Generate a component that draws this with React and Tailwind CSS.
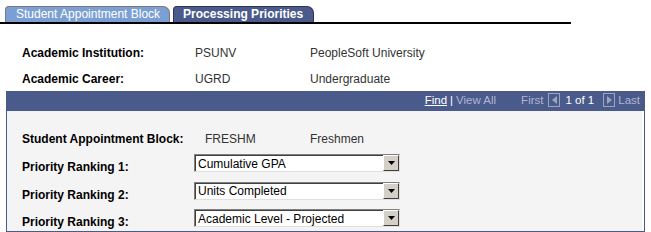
import { useState } from 'react';

const HEADER = [
  { label: 'Academic Institution:', code: 'PSUNV', desc: 'PeopleSoft University' },
  { label: 'Academic Career:', code: 'UGRD', desc: 'Undergraduate' },
];

const RANKINGS = [
  { label: 'Priority Ranking 1:', value: 'Cumulative GPA' },
  { label: 'Priority Ranking 2:', value: 'Units Completed' },
  { label: 'Priority Ranking 3:', value: 'Academic Level - Projected' },
];

function Dropdown({ value }) {
  return (
    <div className="flex h-[18px] w-[206px] border border-t-[#808080] border-l-[#808080] border-b-[#e0e0e0] border-r-[#e0e0e0] bg-white">
      <div className="flex flex-1 items-center border-t border-l border-[#404040] pl-[2px] text-[12px] text-black leading-none">
        {value}
      </div>
      <div className="flex w-[16px] items-center justify-center border border-t-white border-l-white border-b-[#404040] border-r-[#404040] bg-[#d4d0c8]">
        <svg width="7" height="4" viewBox="0 0 7 4"><path d="M0 0h7L3.5 4z" fill="#000" /></svg>
      </div>
    </div>
  );
}

function NavArrow({ dir }) {
  return (
    <span className="inline-flex h-[14px] w-[12px] items-center justify-center border border-[#9ca3bf]">
      <svg width="5" height="8" viewBox="0 0 5 8">
        {dir === 'left'
          ? <path d="M5 0v8L0 4z" fill="#9ca3bf" />
          : <path d="M0 0v8l5-4z" fill="#9ca3bf" />}
      </svg>
    </span>
  );
}

export default function App() {
  const [active] = useState(1);

  return (
    <div className="h-[232px] w-[651px] overflow-hidden bg-white font-['Liberation_Sans',Arial,sans-serif] text-[12px] text-[#333]">
      {/* tabs */}
      <div className="flex w-[571px] items-end gap-[3px] border-b-2 border-black pl-[5px] pt-[6px]">
        <div className={`h-[16px] rounded-tl-[4px] rounded-tr-[7px] border-t border-r border-l border-[#7a7a7a] pl-[10px] pr-[9px] leading-[15px] text-white ${active === 0 ? 'bg-[#4a5a8b] font-bold' : 'bg-[#7b9fd3]'}`}>
          Student Appointment Block
        </div>
        <div className={`h-[16px] rounded-tl-[4px] rounded-tr-[7px] border-t border-r border-l border-[#2d3550] pl-[9px] pr-[10px] leading-[15px] text-white ${active === 1 ? 'bg-[#4a5a8b] font-bold' : 'bg-[#7b9fd3]'}`}>
          Processing Priorities
        </div>
      </div>

      {/* header fields */}
      <div className="mt-[20px] flex flex-col gap-[9px] pl-[22px]">
        {HEADER.map(r => (
          <div key={r.label} className="flex h-[17px] items-center">
            <span className="w-[173px] font-bold text-black">{r.label}</span>
            <span className="w-[115px]">{r.code}</span>
            <span>{r.desc}</span>
          </div>
        ))}
      </div>

      {/* scroll area */}
      <div className="ml-[6px] mt-[4px] w-[639px] border-x border-b border-[#4a5a8b]">
        <div className="flex h-[20px] items-center justify-end bg-[#4a5a8b] pr-[4px] text-[11.5px] text-[#aeb6d4]">
          <span className="text-white underline">Find</span>
          <span className="mx-[3px] text-white">|</span>
          <span>View All</span>
          <span className="ml-[25px]">First</span>
          <span className="ml-[5px]"><NavArrow dir="left" /></span>
          <span className="ml-[5px] text-white">1 of 1</span>
          <span className="ml-[9px]"><NavArrow dir="right" /></span>
          <span className="ml-[3px]">Last</span>
        </div>
        <div className="mr-[2px] bg-[#f4f4f4] pb-[2px] pl-[15px] pt-[19px]">
          <div className="flex h-[17px] items-center">
            <span className="w-[183px] font-bold text-black">Student Appointment Block:</span>
            <span className="w-[105px]">FRESHM</span>
            <span>Freshmen</span>
          </div>
          <div className="mt-[7px] flex flex-col gap-[7.5px]">
            {RANKINGS.map(r => (
              <div key={r.label} className="flex h-[20px] items-start">
                <span className="w-[172px] pt-[6px] font-bold leading-[14px] text-black">{r.label}</span>
                <Dropdown value={r.value} />
              </div>
            ))}
          </div>
        </div>
      </div>
    </div>
  );
}
